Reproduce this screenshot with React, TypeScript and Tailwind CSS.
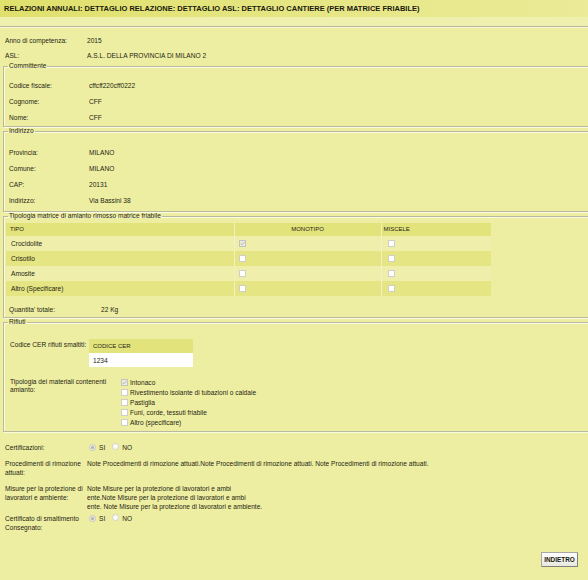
import type { ReactNode } from 'react'

function Check({ on }: { on?: boolean }) {
  return (
    <span
      className={`inline-flex h-[7px] w-[7px] shrink-0 items-center justify-center border ${
        on ? 'border-[#c4c4bc] bg-[#ebebe4]' : 'border-[#cfcfc6] bg-white'
      }`}
    >
      {on && (
        <svg viewBox="0 0 7 7" className="h-[5px] w-[5px]">
          <path d="M1 3.6 L2.8 5.3 L6 1.4" stroke="#a8a8a0" strokeWidth="1.1" fill="none" />
        </svg>
      )}
    </span>
  )
}

function Radio({ on }: { on?: boolean }) {
  return (
    <span
      className={`inline-flex h-[7px] w-[7px] shrink-0 items-center justify-center rounded-full border ${
        on ? 'border-[#c8c8c0] bg-[#ececE4]' : 'border-[#d4d4cc] bg-[#fafaf6]'
      }`}
    >
      {on && <span className="h-[3px] w-[3px] rounded-full bg-[#b0b0a8]" />}
    </span>
  )
}

function Box({ title, className, children }: { title: string; className?: string; children: ReactNode }) {
  return (
    <fieldset
      className={`ml-[3px] w-[600px] border border-[#b9b9a2] shadow-[inset_1px_1px_0_#fbfbe0,1px_1px_0_#fbfbe0] ${className ?? ''}`}
    >
      <legend className="ml-[4px] px-px leading-[8px]">{title}</legend>
      {children}
    </fieldset>
  )
}

function Row({ label, value, w }: { label: string; value: string; w: string }) {
  return (
    <div className="flex h-4 items-center">
      <div className={w}>{label}</div>
      <div>{value}</div>
    </div>
  )
}

const tipi = [
  { name: 'Crocidolite', mono: true },
  { name: 'Crisotilo', mono: false },
  { name: 'Amosite', mono: false },
  { name: 'Altro (Specificare)', mono: false },
]

const materiali = [
  { name: 'Intonaco', on: true },
  { name: 'Rivestimento isolante di tubazioni o caldaie', on: false },
  { name: 'Pastiglia', on: false },
  { name: 'Funi, corde, tessuti friabile', on: false },
  { name: 'Altro (specificare)', on: false },
]

export default function App() {
  return (
    <div className="h-[580px] w-[588px] overflow-hidden bg-[#eeeea2] font-['Liberation_Sans',Arial,sans-serif] text-[6.6px] leading-[9px] text-[#1e1e12]">
      {/* Title */}
      <div className="flex h-[17px] items-center bg-gradient-to-r from-[#e0e06c] to-[#ebeb98] pl-1 text-[7.5px] font-bold text-[#1a1a0e]">
        RELAZIONI ANNUALI: DETTAGLIO RELAZIONE: DETTAGLIO ASL: DETTAGLIO CANTIERE (PER MATRICE FRIABILE)
      </div>
      <div className="h-[9px] bg-[#f0f0ae]" />
      <div className="h-[2px] border-t border-[#b8b8a2] bg-[#f6f6d2]" />

      <div className="pt-[4px]">
        <div className="pl-[5px]">
          <Row label="Anno di competenza:" value="2015" w="w-[82px]" />
          <div className="flex h-[14px] items-center">
            <div className="w-[82px]">ASL:</div>
            <div>A.S.L. DELLA PROVINCIA DI MILANO 2</div>
          </div>
        </div>

        {/* Committente */}
        <Box title="Committente" className="pt-[7px] pb-px">
          <div className="pl-[5px]">
            <Row label="Codice fiscale:" value="cffcff220cff0222" w="w-[80px]" />
            <Row label="Cognome:" value="CFF" w="w-[80px]" />
            <Row label="Nome:" value="CFF" w="w-[80px]" />
          </div>
        </Box>

        {/* Indirizzo */}
        <Box title="Indirizzo" className="pt-[9px] pb-[3px]">
          <div className="pl-[5px]">
            <Row label="Provincia:" value="MILANO" w="w-[80px]" />
            <Row label="Comune:" value="MILANO" w="w-[80px]" />
            <Row label="CAP:" value="20131" w="w-[80px]" />
            <Row label="Indirizzo:" value="Via Bassini 38" w="w-[80px]" />
          </div>
        </Box>

        {/* Tipologia matrice */}
        <Box title="Tipologia matrice di amianto rimosso matrice friabile" className="pt-[3px] pb-px">
          <table className="ml-[2px] w-[485px] border-collapse">
            <thead>
              <tr className="h-[13px] bg-[#e3e37c] text-[6px]">
                <th className="w-[228px] border-r border-[#f2f2c0] pl-[4px] text-left font-normal">TIPO</th>
                <th className="w-[147px] border-r border-[#f2f2c0] text-center font-normal">MONOTIPO</th>
                <th className="pl-[2px] text-left font-normal">MISCELE</th>
              </tr>
            </thead>
            <tbody>
              {tipi.map((t, i) => (
                <tr key={t.name} className={`h-[15px] ${i % 2 === 0 ? 'bg-[#efefab]' : 'bg-[#e5e583]'}`}>
                  <td className="border-r border-[#f2f2c0] pl-[5px]">{t.name}</td>
                  <td className="border-r border-[#f2f2c0] pl-[4px]">
                    <div className="flex"><Check on={t.mono} /></div>
                  </td>
                  <td className="pl-[6px]">
                    <div className="flex"><Check /></div>
                  </td>
                </tr>
              ))}
            </tbody>
          </table>
          <div className="mt-[6px] flex h-[14px] items-center pl-[5px]">
            <div className="w-[92px]">Quantita' totale:</div>
            <div>22 Kg</div>
          </div>
        </Box>

        {/* Rifiuti */}
        <Box title="Rifiuti" className="pt-[13px] pb-[4px]">
          <div className="flex pl-[6px]">
            <div className="w-[79px] pt-[1px]">Codice CER rifiuti smaltiti:</div>
            <div className="w-[104px]">
              <div className="flex h-[14px] items-center bg-[#e3e37c] pl-[4px] text-[6px]">CODICE CER</div>
              <div className="flex h-[14px] items-center bg-white pl-[4px]">1234</div>
            </div>
          </div>
          <div className="mt-[10px] flex pl-[6px]">
            <div className="w-[111px] pt-[0.5px] leading-[8.5px]">Tipologia dei materiali contenenti amianto:</div>
            <div className="flex flex-col">
              {materiali.map((m) => (
                <div key={m.name} className="flex h-[10px] items-center gap-[2px]">
                  <Check on={m.on} />
                  <span>{m.name}</span>
                </div>
              ))}
            </div>
          </div>
        </Box>

        {/* Bottom section */}
        <div className="pl-[5px] pt-[10px]">
          <div className="flex h-[10px] items-center">
            <div className="w-[84px]">Certificazioni:</div>
            <div className="flex items-center gap-[3px]">
              <Radio on />
              <span>SI</span>
              <span className="ml-[4px]"><Radio /></span>
              <span>NO</span>
            </div>
          </div>

          <div className="mt-[7px] flex">
            <div className="w-[82px]">Procedimenti di rimozione attuati:</div>
            <div>
              Note Procedimenti di rimozione attuati.Note Procedimenti di rimozione attuati. Note Procedimenti di rimozione attuati.
            </div>
          </div>

          <div className="mt-[7px] flex">
            <div className="w-[82px]">Misure per la protezione di lavoratori e ambiente:</div>
            <div>
              <div>Note Misure per la protezione di lavoratori e ambi</div>
              <div>ente.Note Misure per la protezione di lavoratori e ambi</div>
              <div>ente. Note Misure per la protezione di lavoratori e ambiente.</div>
            </div>
          </div>

          <div className="mt-[3px] flex">
            <div className="w-[84px]">Certificato di smaltimento Consegnato:</div>
            <div className="flex h-[9px] items-center gap-[3px]">
              <Radio on />
              <span>SI</span>
              <span className="ml-[4px]"><Radio /></span>
              <span>NO</span>
            </div>
          </div>

          <div className="mt-[20px] flex justify-end pr-[10px]">
            <button className="h-[15px] w-[37px] rounded-[1px] border border-[#a8a8a0] border-b-[#808078] border-r-[#808078] bg-gradient-to-b from-white to-[#e8e8e0] text-[6.4px] font-bold text-[#1a1a0e]">
              INDIETRO
            </button>
          </div>
        </div>
      </div>
    </div>
  )
}
